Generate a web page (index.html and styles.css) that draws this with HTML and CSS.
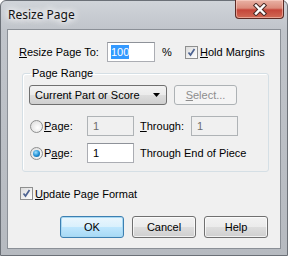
FILE: index.html
```html
<!DOCTYPE html>
<html lang="en">
<head>
    <meta charset="UTF-8">
    <title>Resize Page</title>
    <link rel="stylesheet" href="styles.css">
</head>
<body>
    <div class="window">
        <div class="titlebar">
            <span class="title">Resize Page</span>
            <div class="close">
                <svg width="18" height="13" viewBox="0 0 18 13">
                    <path d="M5 2.5 L13 10.5 M13 2.5 L5 10.5" stroke="#4a2a26" stroke-width="4.4" stroke-linecap="square"/>
                    <path d="M5 2.5 L13 10.5 M13 2.5 L5 10.5" stroke="#fff" stroke-width="2.4" stroke-linecap="square"/>
                </svg>
            </div>
        </div>
        <div class="client">
            <div class="scale-row">
                <span class="scale-label"><u>R</u>esize Page To:</span>
                <div class="textbox scale-box"><span class="sel">100</span></div>
                <span class="pct">%</span>
                <span class="check">
                    <svg width="11" height="11" viewBox="0 0 11 11"><path d="M2.5 5.5 L4.5 8 L8.5 2" fill="none" stroke="#4d6391" stroke-width="1.7"/></svg>
                </span>
                <span class="check-label"><u>H</u>old Margins</span>
            </div>

            <fieldset class="group">
                <legend>Page Range</legend>
                <div class="combo-row">
                    <div class="combo">
                        <span>Current Part or Score</span>
                        <svg class="arrow" width="7" height="4" viewBox="0 0 7 4"><path d="M0 0 H7 L3.5 4 Z" fill="#000"/></svg>
                    </div>
                    <div class="btn btn-disabled"><u>S</u>elect...</div>
                </div>
                <div class="radio-row first">
                    <span class="radio"></span>
                    <span class="radio-label"><u>P</u>age:</span>
                    <div class="textbox small disabled">1</div>
                    <span class="thru"><u>T</u>hrough:</span>
                    <div class="textbox small disabled">1</div>
                </div>
                <div class="radio-row">
                    <span class="radio on"><span class="dot"></span></span>
                    <span class="radio-label">P<u>a</u>ge:</span>
                    <div class="textbox small">1</div>
                    <span class="thru">Through End of Piece</span>
                </div>
            </fieldset>

            <div class="update-row">
                <span class="check">
                    <svg width="11" height="11" viewBox="0 0 11 11"><path d="M2.5 5.5 L4.5 8 L8.5 2" fill="none" stroke="#4d6391" stroke-width="1.7"/></svg>
                </span>
                <span class="check-label"><u>U</u>pdate Page Format</span>
            </div>

            <div class="buttons">
                <div class="btn btn-default">OK</div>
                <div class="btn">Cancel</div>
                <div class="btn">Help</div>
            </div>
        </div>
    </div>
</body>
</html>
```

FILE: styles.css
```css
* {
    box-sizing: border-box;
}
body {
    margin: 0;
    width: 288px;
    height: 256px;
    overflow: hidden;
    font-family: "Liberation Sans", Arial, sans-serif;
    font-size: 11px;
    color: #000;
}
.window {
    height: 256px;
    display: flex;
    flex-direction: column;
    padding: 0 6px 6px;
    border: 1px solid #6b7077;
    border-radius: 6px 6px 0 0;
    background: linear-gradient(#d0d4d9, #c0c4ca 30px, #b6bac0);
}
.titlebar {
    height: 28px;
    display: flex;
    align-items: flex-start;
}
.title {
    margin: 6px 0 0 1px;
    font-family: "Noto Sans", sans-serif;
    font-size: 12px;
    line-height: 16px;
    color: #111;
    text-shadow: 0 0 6px #fff, 0 0 8px #fff, 0 0 10px rgba(255,255,255,0.9);
}
.close {
    margin: -1px -3px 0 auto;
    width: 49px;
    height: 19px;
    display: flex;
    align-items: center;
    justify-content: center;
    border: 1px solid #5c2b25;
    border-top: none;
    border-radius: 0 0 4px 4px;
    background: linear-gradient(#e9b2a5, #db8b7b 45%, #c5463a 55%, #d06a55);
    box-shadow: inset 0 0 0 1px rgba(255,220,210,0.5);
}
.client {
    flex: 1;
    background: #f0f0f0;
    border: 1px solid #8b9097;
    padding: 12px 0 0 11px;
}
u {
    text-decoration: underline;
}
.scale-row {
    display: flex;
    align-items: center;
    height: 20px;
}
.scale-label {
    width: 88px;
}
.textbox {
    height: 20px;
    background: #fff;
    border: 1px solid #abadb3;
    border-top-color: #8e9299;
    padding: 0 3px;
    display: flex;
    align-items: center;
    line-height: 14px;
}
.scale-box {
    width: 48px;
}
.sel {
    background: #3399ff;
    color: #fff;
}
.pct {
    margin-left: 7px;
    width: 23px;
}
.check {
    width: 13px;
    height: 13px;
    border: 1px solid #8e8f8f;
    background: linear-gradient(135deg, #dcdcdc, #fff);
    display: flex;
    align-items: center;
    justify-content: center;
}
.check-label {
    margin-left: 2px;
}
.group {
    margin: 5px 0 0 3px;
    width: 247px;
    padding: 5px 6px 8px 6px;
    border: 1px solid #d5dfe5;
    border-radius: 3px;
    box-shadow: inset 1px 1px 0 #fff;
    min-width: 0;
}
.group legend {
    padding: 0 2px;
    margin-left: 1px;
    line-height: 13px;
}
.combo-row {
    display: flex;
    gap: 7px;
}
.combo {
    width: 138px;
    height: 20px;
    display: flex;
    align-items: center;
    justify-content: space-between;
    padding: 0 4px 0 5px;
    border: 1px solid #707070;
    border-radius: 3px;
    background: linear-gradient(#f2f2f2, #ebebeb 50%, #dddddd 51%, #cfcfcf);
}
.arrow {
    margin-right: 2px;
}
.btn {
    width: 64px;
    height: 22px;
    display: flex;
    align-items: center;
    justify-content: center;
    border: 1px solid #707070;
    border-radius: 3px;
    background: linear-gradient(#f2f2f2, #ebebeb 50%, #dddddd 51%, #cfcfcf);
    box-shadow: inset 0 0 0 1px rgba(255,255,255,0.7);
}
.btn-disabled {
    width: 63px;
    height: 20px;
    color: #8d8d8d;
    border-color: #adb2b5;
    background: #f4f4f4;
    box-shadow: none;
}
.btn-default {
    border-color: #3c7fb1;
    background: linear-gradient(#eaf6fd, #d9f0fc 50%, #bee6fd 51%, #a7d9f5);
    box-shadow: inset 0 0 0 1px #a8d8f2;
}
.radio-row {
    display: flex;
    align-items: center;
    margin-top: 7px;
    height: 20px;
}
.radio-row.first {
    margin-top: 11px;
}
.radio {
    width: 13px;
    height: 13px;
    margin-left: 1px;
    border-radius: 50%;
    border: 1px solid #8e8f8f;
    background: radial-gradient(circle at 60% 60%, #fff, #d8d8d8);
    display: flex;
    align-items: center;
    justify-content: center;
}
.radio .dot {
    width: 7px;
    height: 7px;
    border-radius: 50%;
    background: radial-gradient(circle at 40% 35%, #9ee0ff, #1e8ed4 55%, #0b4f8a);
}
.radio-label {
    margin-left: 1px;
    width: 43px;
}
.textbox.small {
    width: 47px;
    padding-left: 5px;
}
.textbox.disabled {
    background: #f0f0f0;
    border-color: #afb3b6;
    color: #6d6d6d;
}
.thru {
    margin-left: 6px;
    width: 51px;
    white-space: nowrap;
}
.update-row {
    display: flex;
    align-items: center;
    margin: 15px 0 0 1px;
}
.buttons {
    display: flex;
    gap: 8px;
    margin: 16px 0 0 41px;
}
```
